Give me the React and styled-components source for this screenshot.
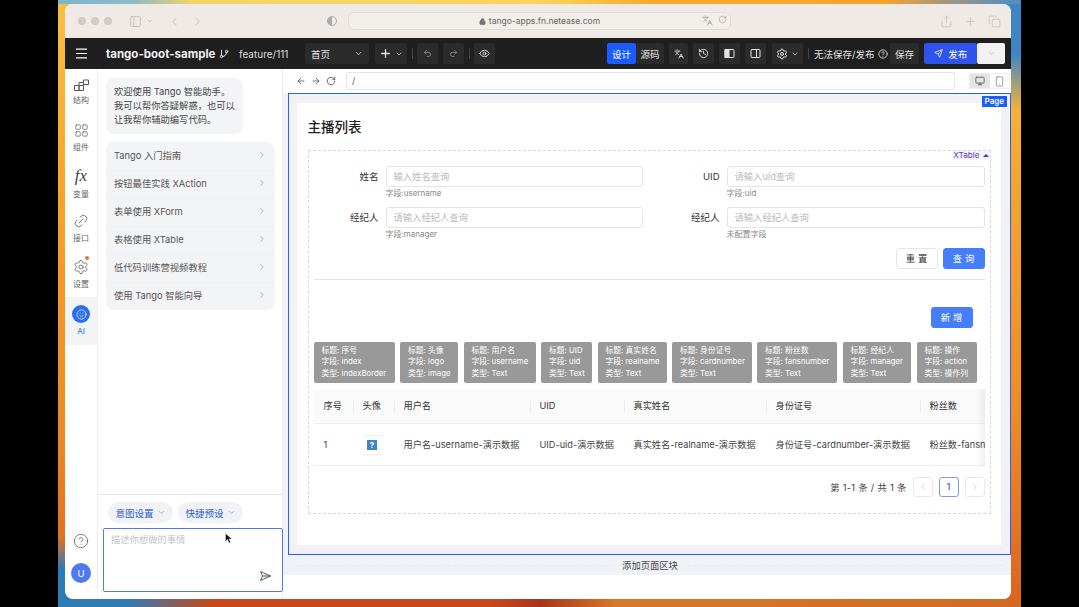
import React from 'react';
import styled, { createGlobalStyle } from 'styled-components';
import {
  Menu, GitBranch, ChevronDown, ChevronRight, ChevronLeft, Plus, Undo2, Redo2, Eye, Languages,
  History, Settings, ArrowLeft, ArrowRight, RotateCw, CircleHelp, Monitor, Smartphone, Send,
  LayoutGrid, Link2, Lock, Share, Copy, PanelLeft, Smile,
} from 'lucide-react';

const GlobalStyle = createGlobalStyle`
  html, body { margin: 0; padding: 0; background: #000; }
  body { font-family: Inter, "Noto Sans CJK SC", "Liberation Sans", sans-serif; color: #333; overflow: hidden; }
  * { box-sizing: border-box; }
`;

const Stage = styled.div`
  width: 1079px;
  height: 607px;
  padding-left: 58px;
`;

const Wallpaper = styled.div`
  width: 963px;
  height: 607px;
  padding: 4px 10px 8px 7px;
  display: flex;
  background:
    linear-gradient(90deg, #7fb4cf 0%, #8fbcc4 8%, #f4d468 14%, #fdd35a 50%, #f8a92c 62%, #f5a52c 86%, #a3977f 92%, #4f8ec4 100%) top / 100% 4px no-repeat,
    linear-gradient(90deg, #2f7cb5 0%, #2f7cb5 7%, #c8481c 16%, #c8481c 45%, #a8341a 50%, #d9782a 58%, #cf6a24 100%) bottom / 100% 8px no-repeat,
    radial-gradient(90px 70px at 0% 100%, #2f7cb5 55%, transparent 100%),
    radial-gradient(60px 110px at 100% 0%, #3f85c4 50%, transparent 100%),
    linear-gradient(180deg, #f8c044 0%, #f6a52e 30%, #ee8a24 70%, #d9641f 100%);
`;

const Window = styled.div`
  flex: 1;
  position: relative;
  display: flex;
  flex-direction: column;
  background: #fff;
  border-radius: 8px;
  overflow: hidden;
`;

const TitleBar = styled.div`
  height: 34px;
  flex: none;
  background: #efeae6;
  display: flex;
  align-items: center;
  padding-left: 13px;
  color: #b5b1ad;
`;

const Light = styled.span`
  width: 8px;
  height: 8px;
  margin-right: 5px;
  border-radius: 50%;
  background: #cfcbc7;
`;

const SafariGroup = styled.div`
  display: flex;
  align-items: center;
  gap: ${(p) => p.$gap || 10}px;
  margin-left: ${(p) => p.$left || 0}px;
`;

const UrlBar = styled.div`
  width: 383px;
  height: 18px;
  margin-left: 11px;
  border: 1px solid #e2ddd8;
  border-radius: 6px;
  background: #f2eeea;
  display: flex;
  align-items: center;
  justify-content: center;
  position: relative;
  font-size: 8.5px;
  color: #666;
  gap: 3px;
`;

const UrlTools = styled.div`
  position: absolute;
  right: 3px;
  top: 2px;
  display: flex;
  gap: 5px;
  color: #8f8b87;
`;

const Header = styled.div`
  height: 31px;
  flex: none;
  background: #1f1f1f;
  display: flex;
  align-items: center;
  color: #fff;
  padding-left: 9px;
`;

const AppName = styled.div`
  font-size: 11.5px;
  font-weight: 700;
  margin-left: 17px;
  width: 113px;
  white-space: nowrap;
  color: #f0f0f0;
`;

const BranchName = styled.div`
  font-size: 10px;
  margin-left: 10px;
  width: 66px;
  white-space: nowrap;
  color: #ddd;
`;

const HeadButton = styled.div`
  width: ${(p) => p.$w}px;
  height: 21px;
  margin-left: ${(p) => p.$left || 0}px;
  background: ${(p) => p.$bg || '#2b2b2b'};
  color: ${(p) => p.$color || '#e4e4e4'};
  display: flex;
  align-items: center;
  justify-content: ${(p) => p.$between ? 'space-between' : 'center'};
  padding: ${(p) => p.$between ? '0 6px' : '0'};
  gap: 3px;
  font-size: 9.5px;
  border-radius: 2px;
  flex: none;
`;

const HeadDivider = styled.span`
  width: 1px;
  height: 11px;
  margin-left: ${(p) => p.$left}px;
  background: #444;
  flex: none;
`;

const HeadText = styled.div`
  font-size: 9.5px;
  margin-left: 5px;
  width: 76px;
  display: flex;
  align-items: center;
  gap: 4px;
  white-space: nowrap;
  color: #e4e4e4;
`;

const Spacer = styled.div`
  flex: 1;
`;

const HeadEnd = styled.div`
  flex: none;
  width: 6px;
`;

const Body = styled.div`
  flex: 1;
  display: flex;
  min-height: 0;
`;

const Rail = styled.div`
  width: 33px;
  flex: none;
  border-right: 1px solid #f0f0f0;
  display: flex;
  flex-direction: column;
  align-items: stretch;
`;

const RailItem = styled.div`
  height: ${(p) => p.$active ? 48 : 45.5}px;
  display: flex;
  flex-direction: column;
  align-items: center;
  justify-content: center;
  gap: 3px;
  font-size: 8px;
  color: ${(p) => p.$active ? '#2a6df4' : '#666'};
  background: ${(p) => p.$active ? '#f3f4f6' : 'transparent'};
  position: relative;
`;

const RailDot = styled.span`
  position: absolute;
  right: 8px;
  top: 5px;
  width: 4px;
  height: 4px;
  border-radius: 50%;
  background: #f0703a;
`;

const FxGlyph = styled.span`
  font: italic 17px/18px "Liberation Serif", serif;
  color: #444;
`;

const LinkGlyph = styled(Link2)`
  transform: rotate(-45deg);
`;

const AiBadge = styled.span`
  width: 18px;
  height: 18px;
  border-radius: 50%;
  background: #2a6df4;
  display: flex;
  align-items: center;
  justify-content: center;
  color: #cfe0ff;
`;

const RailFoot = styled.div`
  margin-top: auto;
  padding-bottom: 16px;
  display: flex;
  flex-direction: column;
  align-items: center;
  gap: 14px;
  color: #555;
`;

const Avatar = styled.span`
  width: 20px;
  height: 20px;
  border-radius: 50%;
  background: #5079ee;
  color: #fff;
  font-size: 9.5px;
  display: flex;
  align-items: center;
  justify-content: center;
`;

const AiPanel = styled.div`
  width: 185px;
  flex: none;
  border-right: 1px solid #eeeeee;
  display: flex;
  flex-direction: column;
`;

const AiFeed = styled.div`
  flex: 1;
  padding: 9px 7px 0 8px;
  border-bottom: 1px solid #e8e8e8;
`;

const Bubble = styled.div`
  width: 137px;
  height: 56px;
  padding: 7px 8px;
  background: #f3f4f6;
  border-radius: 8px;
  font-size: 9.3px;
  line-height: 14px;
  color: #444;
  white-space: nowrap;
`;

const Guides = styled.div`
  margin-top: 8px;
  background: #f3f4f6;
  border-radius: 8px;
  width: 169px;
`;

const GuideRow = styled.div`
  height: 28px;
  padding: 0 8px 3px;
  display: flex;
  align-items: center;
  justify-content: space-between;
  font-size: 9.3px;
  color: #555;
  border-top: 1px solid ${(p) => p.$first ? 'transparent' : '#f0f1f3'};
  white-space: nowrap;
  svg { color: #aaa; }
`;

const AiComposer = styled.div`
  height: 104px;
  flex: none;
  padding: 7px 0 7px 5px;
  display: flex;
  flex-direction: column;
`;

const Pills = styled.div`
  display: flex;
  gap: 5px;
  padding-left: 5px;
`;

const Pill = styled.div`
  height: 21px;
  width: 65px;
  border-radius: 11px;
  background: #f0f2f5;
  color: #2f5fd0;
  font-size: 9.5px;
  display: flex;
  align-items: center;
  justify-content: center;
  gap: 3px;
  svg { color: #999; }
`;

const PromptBox = styled.div`
  margin-top: 5px;
  flex: 1;
  border: 1px solid #4f78e8;
  border-radius: 2px;
  padding: 3px 7px;
  font-size: 9.3px;
  color: #c4c4c4;
  position: relative;
  margin-right: -1px;
`;

const SendSpot = styled.span`
  position: absolute;
  right: 11px;
  bottom: 10px;
  color: #444;
  display: flex;
`;

const CursorSpot = styled.svg`
  position: absolute;
  left: 160px;
  top: 529px;
`;

const Design = styled.div`
  flex: 1;
  min-width: 0;
  display: flex;
  flex-direction: column;
`;

const CanvasBar = styled.div`
  height: 24px;
  flex: none;
  display: flex;
  align-items: center;
  padding-left: 13px;
  gap: 5px;
  color: #555;
`;

const AddressInput = styled.div`
  width: 609px;
  height: 18px;
  margin-left: 5px;
  border: 1px solid #e6e6e6;
  border-radius: 2px;
  font-size: 9px;
  padding: 2px 5px;
  color: #555;
`;

const DeviceSwitch = styled.div`
  margin-left: 9px;
  width: 41px;
  height: 16px;
  border: 1px solid #eee;
  display: flex;
`;

const DeviceTab = styled.span`
  flex: 1;
  display: flex;
  align-items: center;
  justify-content: center;
  background: ${(p) => p.$on ? '#e4e4e4' : '#fff'};
  color: #555;
`;

const CanvasArea = styled.div`
  flex: 1;
  display: flex;
  flex-direction: column;
  background: #f0f2f7;
  padding-left: 5px;
  min-height: 0;
`;

const Selection = styled.div`
  height: 462px;
  flex: none;
  border: 1.5px solid #2a5ff5;
  padding: 8.5px 9.5px 9.5px 7.5px;
  position: relative;
`;

const PageTag = styled.span`
  position: absolute;
  top: 2px;
  right: 3px;
  background: #1a5cff;
  color: #fff;
  font-size: 8px;
  font-weight: 600;
  line-height: 11px;
  padding: 0 3px;
`;

const PageSheet = styled.div`
  height: 100%;
  background: #fff;
  padding: 14px 10px 31px 11px;
  display: flex;
  flex-direction: column;
`;

const PageTitle = styled.div`
  font-size: 13.5px;
  font-weight: 500;
  line-height: 20px;
  color: #222;
  margin-bottom: 13px;
`;

const TableBlock = styled.div`
  flex: 1;
  border: 1px dashed #d8d2ea;
  padding: 15px 5px 0;
  position: relative;
`;

const BlockTag = styled.span`
  position: absolute;
  top: 0;
  right: 0;
  font-size: 8.2px;
  line-height: 9px;
  background: #f7f3ff;
  color: #5b45b0;
  padding: 0 1px;
  display: flex;
  align-items: center;
  gap: 3px;
`;

const TagCaret = styled.i`
  width: 0;
  height: 0;
  border: 3px solid transparent;
  border-bottom: 3px solid #4a35a8;
  border-top-width: 0;
`;

const FormGrid = styled.div`
  display: grid;
  grid-template-columns: 329px 330px;
  column-gap: 12px;
  row-gap: 6px;
`;

const Field = styled.div`
  display: grid;
  grid-template-columns: 65px 1fr;
  column-gap: 7px;
  align-items: center;
  height: 35px;
  align-content: start;
`;

const FieldLabel = styled.label`
  text-align: right;
  font-size: 9.5px;
  color: #333;
`;

const FakeInput = styled.div`
  height: 21px;
  border: 1px solid #e4e4e4;
  border-radius: 3px;
  padding: 0 7px;
  font-size: 9.3px;
  line-height: 19px;
  color: #bbb;
`;

const FieldHint = styled.div`
  grid-column: 2;
  font-size: 8px;
  line-height: 12px;
  color: #888;
`;

const FormActions = styled.div`
  display: flex;
  justify-content: flex-end;
  gap: 5px;
  margin-top: 6px;
  padding-bottom: 10px;
  border-bottom: 1px solid #e6e6e6;
`;

const Button = styled.div`
  width: 42px;
  height: 21px;
  border-radius: 3px;
  border: 1px solid ${(p) => p.$primary ? '#467dfb' : '#e6e6e6'};
  background: ${(p) => p.$primary ? '#467dfb' : '#fff'};
  color: ${(p) => p.$primary ? '#fff' : '#333'};
  font-size: 9.3px;
  letter-spacing: 3px;
  text-indent: 3px;
  display: flex;
  align-items: center;
  justify-content: center;
`;

const CreateRow = styled.div`
  display: flex;
  justify-content: flex-end;
  padding: 27px 12px 14px 0;
`;

const ChipRow = styled.div`
  display: flex;
  gap: 5.5px;
  margin-bottom: 6px;
`;

const Chip = styled.div`
  width: ${(p) => p.$w}px;
  height: 41px;
  flex: none;
  background: #999;
  border-radius: 2px;
  color: #fff;
  font-size: 7.8px;
  line-height: 11.7px;
  padding: 3px 0 0 8px;
  white-space: nowrap;
  overflow: hidden;
`;

const TableFrame = styled.div`
  width: 671px;
  overflow: hidden;
  position: relative;
  &::after {
    content: '';
    position: absolute;
    top: 0;
    right: 0;
    bottom: 0;
    width: 8px;
    background: linear-gradient(90deg, transparent, rgba(0, 0, 0, 0.06));
  }
`;

const TableRow = styled.div`
  display: grid;
  grid-template-columns: 39px 41px 136px 94px 142px 154px 200px;
  height: ${(p) => p.$head ? 35 : 42}px;
  padding-top: ${(p) => p.$head ? 0 : 2}px;
  align-items: center;
  background: ${(p) => p.$head ? '#fafafa' : '#fff'};
  border-bottom: 1px solid #eee;
  white-space: nowrap;
  font-size: 9.2px;
  color: ${(p) => p.$head ? '#333' : '#444'};
`;

const Cell = styled.div`
  padding-left: 10px;
  position: relative;
  overflow: hidden;
  line-height: 16px;
  ${(p) => p.$sep && `
    &::before {
      content: '';
      position: absolute;
      left: 0;
      top: 1px;
      height: 14px;
      width: 1px;
      background: #eee;
    }
  `}
`;

const BrokenThumb = styled.div`
  width: 19px;
  height: 20px;
  border-top: 1px solid #eee;
  border-bottom: 1px solid #eee;
  display: flex;
  align-items: center;
  justify-content: center;
`;

const BrokenIcon = styled.span`
  width: 10px;
  height: 10px;
  background: #3f86c8;
  color: #fff;
  font-size: 8px;
  line-height: 10px;
  font-weight: 700;
  text-align: center;
`;

const Pager = styled.div`
  display: flex;
  justify-content: flex-end;
  align-items: center;
  gap: 6px;
  margin-top: 11px;
  font-size: 9.3px;
  color: #444;
`;

const PagerText = styled.span`
  letter-spacing: 0.3px;
`;

const PagerButton = styled.span`
  width: 20px;
  height: 20px;
  border: 1px solid ${(p) => p.$on ? '#7d9ce8' : '#e8e8e8'};
  border-radius: 3px;
  display: flex;
  align-items: center;
  justify-content: center;
  color: ${(p) => p.$on ? '#4a78e8' : '#ccc'};
  font-weight: 600;
`;

const AddBlockBar = styled.div`
  height: 20px;
  flex: none;
  margin-left: -5px;
  display: flex;
  align-items: center;
  font-size: 9.3px;
  color: #444;
  gap: 10px;
  padding: 0 8px 0 14px;
  white-space: nowrap;
  &::before, &::after {
    content: '';
    flex: 1;
    border-top: 1px dashed #e8eaef;
  }
`;

const BottomGap = styled.div`
  height: 24px;
  flex: none;
  background: #fff;
`;

function StructureIcon() {
  return (
    <svg width="15" height="12" viewBox="0 0 15 12" fill="none" stroke="#555" strokeWidth="1">
      <path d="M0.5 6.500h4.500v5h-4.500zM5 6.500h4.500v5h-4.500zM5 6.500v-3h4.500v3M9.500 1h5v4.500h-5z" />
    </svg>
  );
}

function SplitPanelIcon({ filled }) {
  return (
    <svg width="11" height="11" viewBox="0 0 11 11" fill="none" stroke="currentColor">
      <rect x="1" y="1.500" width="9" height="8" rx="1" />
      {filled
        ? <rect x="1" y="1.500" width="4" height="8" fill="currentColor" />
        : <path d="M6.500 1.500v8" />}
    </svg>
  );
}

const guides = ['Tango 入门指南', '按钮最佳实践 XAction', '表单使用 XForm', '表格使用 XTable', '低代码训练营视频教程', '使用 Tango 智能向导'];

const chips = [
  { w: 81, title: '序号', field: 'index', type: 'indexBorder' },
  { w: 58, title: '头像', field: 'logo', type: 'image' },
  { w: 72, title: '用户名', field: 'username', type: 'Text' },
  { w: 51, title: 'UID', field: 'uid', type: 'Text' },
  { w: 69, title: '真实姓名', field: 'realname', type: 'Text' },
  { w: 79.5, title: '身份证号', field: 'cardnumber', type: 'Text' },
  { w: 80, title: '粉丝数', field: 'fansnumber', type: 'Text' },
  { w: 68.5, title: '经纪人', field: 'manager', type: 'Text' },
  { w: 60, title: '操作', field: 'action', type: '操作列' },
];

const headers = ['序号', '头像', '用户名', 'UID', '真实姓名', '身份证号', '粉丝数'];

const fields = [
  { label: '姓名', holder: '输入姓名查询', hint: '字段:username' },
  { label: 'UID', holder: '请输入uid查询', hint: '字段:uid' },
  { label: '经纪人', holder: '请输入经纪人查询', hint: '字段:manager' },
  { label: '经纪人', holder: '请输入经纪人查询', hint: '未配置字段' },
];

function App() {
  return (
    <Stage>
      <GlobalStyle />
      <Wallpaper>
        <Window>
          <TitleBar>
            <Light /><Light /><Light />
            <SafariGroup $left={12} $gap={4}>
              <PanelLeft size={13} strokeWidth={1.2} />
              <ChevronDown size={8} />
            </SafariGroup>
            <SafariGroup $left={14} $gap={10}>
              <ChevronLeft size={13} strokeWidth={1.4} />
              <ChevronRight size={13} strokeWidth={1.4} />
            </SafariGroup>
            <SafariGroup $left={123}>
              <svg width="10" height="10" viewBox="0 0 10 10"><circle cx="5" cy="5" r="4.500" fill="#f2eeea" stroke="#aaa" /><path d="M5 .5a4.500 4.500 0 0 0 0 9z" fill="#aaa" /></svg>
            </SafariGroup>
            <UrlBar>
              <Lock size={7} fill="#777" />
              tango-apps.fn.netease.com
              <UrlTools>
                <Languages size={11} strokeWidth={1.3} />
                <RotateCw size={9} strokeWidth={1.3} />
              </UrlTools>
            </UrlBar>
            <SafariGroup $left={209} $gap={11}>
              <Share size={13} strokeWidth={1.1} />
              <Plus size={13} strokeWidth={1.1} />
              <Copy size={13} strokeWidth={1.1} />
            </SafariGroup>
          </TitleBar>
          <Header>
            <Menu size={15} strokeWidth={1.8} />
            <AppName>tango-boot-sample</AppName>
            <GitBranch size={10} />
            <BranchName>feature/111</BranchName>
            <HeadButton $w={64} $between>首页 <ChevronDown size={9} /></HeadButton>
            <HeadButton $w={32} $left={6}><Plus size={13} strokeWidth={2.4} /><ChevronDown size={8} /></HeadButton>
            <HeadDivider $left={5} />
            <HeadButton $w={21} $left={4} $color="#999"><Undo2 size={9} /></HeadButton>
            <HeadButton $w={21} $left={5} $color="#999"><Redo2 size={9} /></HeadButton>
            <HeadDivider $left={5} />
            <HeadButton $w={21} $left={4}><Eye size={11} /></HeadButton>
            <Spacer />
            <HeadButton $w={29} $bg="#1a5cff" $color="#fff">设计</HeadButton>
            <HeadButton $w={28}>源码</HeadButton>
            <HeadButton $w={19} $left={5}><Languages size={10} /></HeadButton>
            <HeadButton $w={21} $left={5}><History size={11} /></HeadButton>
            <HeadButton $w={21} $left={5}><SplitPanelIcon filled /></HeadButton>
            <HeadButton $w={21} $left={5}><SplitPanelIcon /></HeadButton>
            <HeadButton $w={31} $left={6}><Settings size={12} /><ChevronDown size={8} /></HeadButton>
            <HeadDivider $left={5} />
            <HeadText>无法保存/发布<CircleHelp size={10} /></HeadText>
            <HeadButton $w={29}>保存</HeadButton>
            <HeadButton $w={53} $left={5} $bg="#2f54eb" $color="#fff"><Send size={9} />&nbsp;发布</HeadButton>
            <HeadButton $w={28} $bg="#f2f2f2" $color="#bbb"><ChevronDown size={9} /></HeadButton>
            <HeadEnd />
          </Header>
          <Body>
            <Rail>
              <RailItem><StructureIcon />结构</RailItem>
              <RailItem><LayoutGrid size={15} strokeWidth={1.1} color="#555" />组件</RailItem>
              <RailItem><FxGlyph>fx</FxGlyph>变量</RailItem>
              <RailItem><LinkGlyph size={16} strokeWidth={1.1} color="#555" />接口</RailItem>
              <RailItem><Settings size={16} strokeWidth={1.1} color="#555" /><RailDot />设置</RailItem>
              <RailItem $active><AiBadge><Smile size={11} /></AiBadge>AI</RailItem>
              <RailFoot>
                <CircleHelp size={16} strokeWidth={1.1} />
                <Avatar>U</Avatar>
              </RailFoot>
            </Rail>
            <AiPanel>
              <AiFeed>
                <Bubble>
                  欢迎使用 Tango 智能助手。<br />
                  我可以帮你答疑解惑，也可以<br />
                  让我帮你辅助编写代码。
                </Bubble>
                <Guides>
                  {guides.map((g, i) => (
                    <GuideRow key={g} $first={i === 0}>{g}<ChevronRight size={10} /></GuideRow>
                  ))}
                </Guides>
              </AiFeed>
              <AiComposer>
                <Pills>
                  <Pill>意图设置 <ChevronDown size={9} /></Pill>
                  <Pill>快捷预设 <ChevronDown size={9} /></Pill>
                </Pills>
                <PromptBox>
                  描述你想做的事情
                  <SendSpot>
                    <svg width="11" height="10" viewBox="0 0 11 10" fill="none" stroke="currentColor" strokeWidth="0.9"><path d="M0.500 0.500l10 4.500-10 4.500 2-4.500zM2.500 5h8" /></svg>
                  </SendSpot>
                </PromptBox>
              </AiComposer>
            </AiPanel>
            <Design>
              <CanvasBar>
                <ArrowLeft size={10} />
                <ArrowRight size={10} />
                <RotateCw size={10} />
                <AddressInput>/</AddressInput>
                <DeviceSwitch>
                  <DeviceTab $on><Monitor size={10} /></DeviceTab>
                  <DeviceTab><Smartphone size={11} strokeWidth={1.2} /></DeviceTab>
                </DeviceSwitch>
              </CanvasBar>
              <CanvasArea>
                <Selection>
                  <PageTag>Page</PageTag>
                  <PageSheet>
                    <PageTitle>主播列表</PageTitle>
                    <TableBlock>
                      <BlockTag>XTable <TagCaret /></BlockTag>
                      <FormGrid>
                        {fields.map((f) => (
                          <Field key={f.hint}>
                            <FieldLabel>{f.label}</FieldLabel>
                            <FakeInput>{f.holder}</FakeInput>
                            <FieldHint>{f.hint}</FieldHint>
                          </Field>
                        ))}
                      </FormGrid>
                      <FormActions>
                        <Button>重置</Button>
                        <Button $primary>查询</Button>
                      </FormActions>
                      <CreateRow>
                        <Button $primary>新增</Button>
                      </CreateRow>
                      <ChipRow>
                        {chips.map((c) => (
                          <Chip key={c.field} $w={c.w}>
                            标题: {c.title}<br />
                            字段: {c.field}<br />
                            类型: {c.type}
                          </Chip>
                        ))}
                      </ChipRow>
                      <TableFrame>
                        <TableRow $head>
                          {headers.map((h, i) => <Cell key={h} $sep={i > 0}>{h}</Cell>)}
                        </TableRow>
                        <TableRow>
                          <Cell>1</Cell>
                          <Cell><BrokenThumb><BrokenIcon>?</BrokenIcon></BrokenThumb></Cell>
                          <Cell>用户名-username-演示数据</Cell>
                          <Cell>UID-uid-演示数据</Cell>
                          <Cell>真实姓名-realname-演示数据</Cell>
                          <Cell>身份证号-cardnumber-演示数据</Cell>
                          <Cell>粉丝数-fansnumber-演示数据</Cell>
                        </TableRow>
                      </TableFrame>
                      <Pager>
                        <PagerText>第 1-1 条 / 共 1 条</PagerText>
                        <PagerButton><ChevronLeft size={10} /></PagerButton>
                        <PagerButton $on>1</PagerButton>
                        <PagerButton><ChevronRight size={10} /></PagerButton>
                      </Pager>
                    </TableBlock>
                  </PageSheet>
                </Selection>
                <AddBlockBar>添加页面区块</AddBlockBar>
              </CanvasArea>
              <BottomGap />
            </Design>
            <CursorSpot width="8" height="11" viewBox="0 0 8 11">
              <path d="M0.500 0.500v8l2-2 1.500 3.500 1.500-.7-1.500-3.300h3z" fill="#111" stroke="#fff" strokeWidth="0.4" />
            </CursorSpot>
          </Body>
        </Window>
      </Wallpaper>
    </Stage>
  );
}

export default App;
